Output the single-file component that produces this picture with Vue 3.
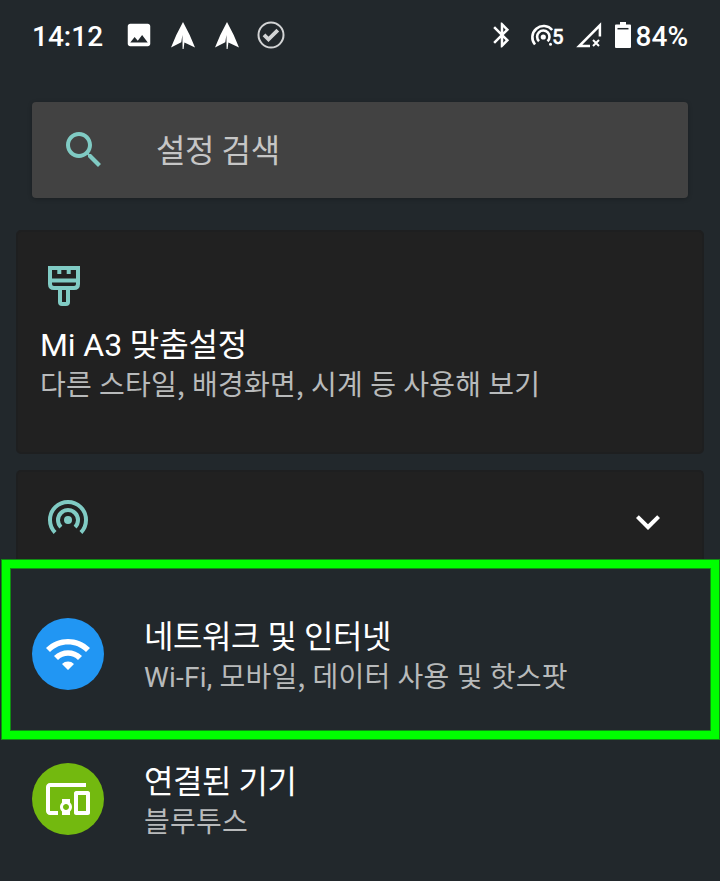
<script setup>
const devicesItem = {
  title: '연결된 기기',
  summary: '블루투스',
}
</script>

<template>
  <div class="screen">
    <header class="status">
      <span class="clock">14:12</span>
      <div class="notifications">
        <svg class="photo" viewBox="0 0 24 24"><path d="M21 19V5c0-1.1-.9-2-2-2H5c-1.1 0-2 .9-2 2v14c0 1.1.9 2 2 2h14c1.1 0 2-.9 2-2zM8.5 13.5l2.5 3.01L14.500 12l4.500 6H5l3.500-4.500z" /></svg>
        <svg v-for="n in 2" :key="n" class="arrow" viewBox="0 0 24 27"><path d="M12 0L5.300 13 0 25.600l10.300-5.300L11.400 13l.2 14h1l.8-6.500L24 25.600 18.700 13z" /></svg>
        <svg class="check" viewBox="0 0 28 28"><circle cx="14" cy="14" r="12.500" /><path d="M7 13.800l4.500 4.600 9.300-9.200" /></svg>
      </div>
      <div class="system">
        <svg class="bluetooth" viewBox="0 0 24 24"><path d="M17.710 7.710L12 2h-1v7.590L6.410 5 5 6.410 10.590 12 5 17.590 6.410 19 11 14.410V22h1l5.710-5.710-4.300-4.290 4.300-4.290zM13 5.830l1.880 1.880L13 9.590V5.830zm1.880 10.460L13 18.170v-3.760l1.880 1.880z" /></svg>
        <svg class="tether" viewBox="0 0 36 28">
          <path class="ring" d="M6 22.500A11 11 0 1 1 23.200 8" />
          <path class="ring" d="M10 19.200A6.200 6.200 0 1 1 18.500 19.300" />
          <circle cx="14.300" cy="15" r="2.600" />
          <circle cx="21.500" cy="22.300" r="1.500" />
          <text x="23.300" y="22">5</text>
        </svg>
        <svg class="signal" viewBox="0 0 26 26"><path d="M23.900 14.500V3.300L3.200 24H14" /><path class="cross" d="M17 18l6 6M23 18l-6 6" /></svg>
        <svg class="battery" viewBox="0 0 16 26"><path d="M5 0h6v2.500h4q1 0 1 1V25q0 1-1 1H1q-1 0-1-1V3.500q0-1 1-1h4z" /><path class="slot" d="M2.500 6.700h11" /></svg>
        <span class="percent">84%</span>
      </div>
    </header>

    <div class="search">
      <svg class="icon teal" viewBox="0 0 24 24"><path d="M15.500 14h-.79l-.28-.27C15.410 12.590 16 11.110 16 9.500 16 5.910 13.090 3 9.500 3S3 5.910 3 9.500 5.910 16 9.500 16c1.610 0 3.090-.59 4.230-1.570l.27.28v.79l5 4.990L20.490 19l-4.990-5zm-6 0C7.010 14 5 11.990 5 9.500S7.010 5 9.500 5 14 7.010 14 9.500 11.990 14 9.500 14z" /></svg>
      <span class="placeholder">설정 검색</span>
    </div>

    <section class="card customize">
      <svg class="brush" viewBox="0 0 32 40">
        <path d="M2 2h28v16q0 4-4 4H6q-4 0-4-4zM2 14.500h28M11.300 2v6M20.700 2v6M12 22v14q0 2 2 2h4q2 0 2-2V22" />
      </svg>
      <h2 class="title">Mi A3 맞춤설정</h2>
      <p class="summary">다른 스타일<span class="comma">,</span> 배경화면<span class="comma">,</span> 시계 등 사용해 보기</p>
    </section>

    <section class="card hotspot">
      <svg class="icon waves" viewBox="0 0 48 48">
        <path d="M11.100 38.500a18 18 0 1 1 25.800 0M16.900 33.100a10 10 0 1 1 14.200 0" />
        <circle cx="24" cy="26" r="4" />
      </svg>
      <svg class="icon chevron" viewBox="0 0 24 24"><path d="M16.590 8.590L12 13.170 7.410 8.590 6 10l6 6 6-6z" /></svg>
    </section>

    <section class="row highlighted">
      <div class="badge blue">
        <svg class="icon" viewBox="0 0 24 24"><path d="M1 9l2 2c4.970-4.970 13.030-4.970 18 0l2-2C16.930 2.930 7.080 2.930 1 9zm8 8l3 3 3-3c-1.650-1.660-4.340-1.660-6 0zm-4-4l2 2c2.760-2.760 7.240-2.760 10 0l2-2C15.140 9.140 8.870 9.140 5 13z" /></svg>
      </div>
      <div class="label">
        <h2 class="title">네트워크 및 인터넷</h2>
        <p class="summary">Wi-Fi, 모바일<span class="comma">,</span> 데이터 사용 및 핫스팟</p>
      </div>
    </section>

    <section class="row devices">
      <div class="badge green">
        <svg class="icon" viewBox="0 0 24 24"><path d="M3 6h18V4H3c-1.100 0-2 .9-2 2v12c0 1.100.9 2 2 2h4v-2H3V6zm10 6H9v1.780c-.61.55-1 1.330-1 2.220s.39 1.670 1 2.220V20h4v-1.780c.61-.55 1-1.340 1-2.220s-.39-1.670-1-2.220V12zm-2 5.500c-.83 0-1.500-.67-1.500-1.500s.67-1.500 1.500-1.500 1.500.67 1.500 1.500-.67 1.500-1.500 1.500zM22 8h-6c-.5 0-1 .5-1 1v10c0 .5.5 1 1 1h6c.5 0 1-.5 1-1V9c0-.5-.5-1-1-1zm-1 10h-4v-8h4v8z" /></svg>
      </div>
      <div class="label">
        <h2 class="title">{{ devicesItem.title }}</h2>
        <p class="summary">{{ devicesItem.summary }}</p>
      </div>
    </section>
  </div>
</template>

<style>
body {
  margin: 0;
  background: #22282c;
}
</style>

<style scoped>
.screen {
  box-sizing: border-box;
  width: 720px;
  height: 881px;
  overflow: hidden;
  display: flex;
  flex-direction: column;
  background: #22282c;
  color: #fff;
  font-family: Roboto, "Noto Sans CJK KR", sans-serif;
}
svg {
  display: block;
  flex: none;
  fill: currentColor;
}
.icon {
  width: 48px;
  height: 48px;
}
.teal {
  color: #80cbc4;
}
.status {
  height: 72px;
  padding: 0 32px;
  display: flex;
  align-items: center;
  font-size: 28px;
  font-weight: 500;
  flex: none;
}
.clock {
  width: 92px;
}
.notifications {
  display: flex;
  align-items: center;
  height: 70px;
  padding-bottom: 2px;
  box-sizing: border-box;
}
.photo {
  width: 30px;
  height: 30px;
}
.arrow {
  width: 24px;
  height: 27px;
  margin-left: 17px;
}
.arrow + .arrow {
  margin-left: 20px;
}
.check {
  width: 28px;
  height: 28px;
  margin-left: 18px;
  fill: none;
  stroke: #d3d4d5;
  stroke-width: 2;
}
.check path {
  stroke-width: 3.8;
}
.system {
  margin-left: auto;
  display: flex;
  align-items: center;
}
.bluetooth {
  width: 30px;
  height: 30px;
  margin: 0 12px 2px 0;
}
.tether {
  width: 36px;
  height: 28px;
  margin-right: 11px;
}
.ring {
  fill: none;
  stroke: #fff;
  stroke-width: 2.6;
}
.tether text {
  font-size: 20px;
  stroke: #fff;
  stroke-width: 0.4;
}
.signal {
  width: 26px;
  height: 26px;
  margin: 0 13px 2px 0;
  fill: none;
  stroke: #fff;
  stroke-width: 2.500;
}
.cross {
  stroke-width: 2;
}
.battery {
  width: 16px;
  height: 26px;
  margin: 0 5px 2px 0;
}
.slot {
  stroke: #22282c;
  stroke-width: 1.500;
}
.search {
  box-sizing: border-box;
  flex: none;
  height: 96px;
  margin: 30px 32px 32px;
  padding-left: 28px;
  display: flex;
  align-items: center;
  gap: 48px;
  border-radius: 4px;
  background: #424242;
  box-shadow: 0 1px 4px rgba(0, 0, 0, 0.25);
  color: #c6c6c6;
  font-size: 32px;
}
.placeholder {
  padding-bottom: 4px;
  letter-spacing: -0.4px;
}
.card {
  box-sizing: border-box;
  flex: none;
  margin: 0 16px;
  border: 2px solid #1e1f20;
  border-radius: 5px;
  background: #212121;
}
.customize {
  height: 224px;
  padding: 34px 22px 0;
  margin-bottom: 16px;
}
.brush {
  width: 32px;
  height: 40px;
  margin: 0 0 19px 8px;
  fill: none;
  stroke: #80cbc4;
  stroke-width: 4;
}
.title,
.summary {
  margin: 0;
  font-weight: 400;
  line-height: 40px;
  white-space: nowrap;
}
.title {
  font-size: 32px;
  letter-spacing: -0.44px;
}
.customize .title {
  letter-spacing: -0.1px;
}
.summary {
  padding-top: 1px;
  font-size: 28px;
  letter-spacing: 0.2px;
  color: #b8babb;
}
.comma {
  font-family: "Noto Sans CJK KR", sans-serif;
  line-height: 1;
}
.hotspot {
  height: 90px;
  padding: 22px 30px 0 26px;
  display: flex;
  justify-content: space-between;
  align-items: flex-start;
  border-bottom: 0;
  border-radius: 5px 5px 0 0;
}
.waves {
  color: #80cbc4;
}
.waves path {
  fill: none;
  stroke: currentColor;
  stroke-width: 4;
}
.chevron {
  margin-top: 4px;
}
.row {
  box-sizing: border-box;
  flex: none;
  display: flex;
  align-items: flex-start;
  gap: 40px;
}
.highlighted {
  height: 179px;
  margin: 0 1px 0 2px;
  padding: 50px 0 0 22px;
  border: 8px solid #00ff00;
  box-shadow: 0 0 0 1px #118c14, inset 0 0 0 1px #118c14;
}
.devices {
  padding: 24px 32px 0;
}
.badge {
  width: 72px;
  height: 72px;
  flex: none;
  display: grid;
  place-items: center;
  border-radius: 50%;
}
.blue {
  background: #2196f3;
}
.green {
  background: #73b90f;
}
.label {
  margin-top: -1px;
}
</style>
